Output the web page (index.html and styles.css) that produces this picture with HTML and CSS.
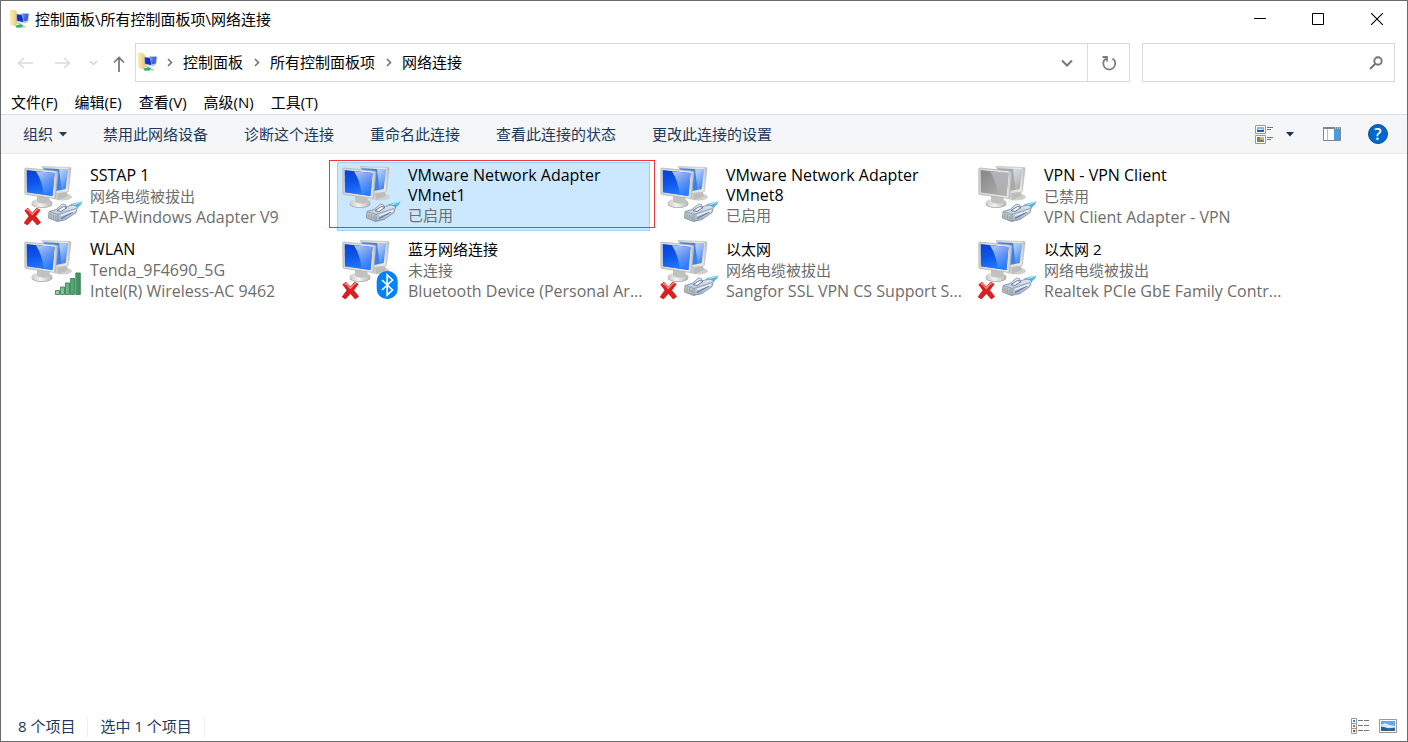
FILE: index.html
```html
<!DOCTYPE html>
<html lang="zh-CN">
<head>
<meta charset="utf-8">
<title>控制面板\所有控制面板项\网络连接</title>
<link rel="stylesheet" href="styles.css">
</head>
<body>
<svg class="sprite" aria-hidden="true">
  <defs>
    <linearGradient id="blue" x1="0" y1="0" x2=".3" y2="1"><stop offset="0" stop-color="#0b3fd0"/><stop offset=".5" stop-color="#0c55ea"/><stop offset="1" stop-color="#2278ff"/></linearGradient>
    <linearGradient id="shine" x1="0" y1="0" x2=".5" y2="1"><stop offset="0" stop-color="#d4e8ff" stop-opacity=".85"/><stop offset="1" stop-color="#fff" stop-opacity=".05"/></linearGradient>
    <linearGradient id="gray" x1="0" y1="0" x2="1" y2="1"><stop offset="0" stop-color="#858585"/><stop offset="1" stop-color="#b4b4b4"/></linearGradient>
    <linearGradient id="bezel" x1="0" y1="0" x2="1" y2="0"><stop offset="0" stop-color="#d2d2d0"/><stop offset=".85" stop-color="#e9e9e7"/><stop offset="1" stop-color="#b6b6b4"/></linearGradient>
    <linearGradient id="base" x1="0" y1="0" x2="1" y2="0"><stop offset="0" stop-color="#c9c9c7"/><stop offset=".45" stop-color="#f3f3f1"/><stop offset="1" stop-color="#b4b4b2"/></linearGradient>
    <linearGradient id="bar" x1="0" y1="0" x2="1" y2="0"><stop offset="0" stop-color="#9dd4ae"/><stop offset="1" stop-color="#398f5a"/></linearGradient>
    <linearGradient id="folder" x1="0" y1="0" x2="1" y2="0"><stop offset="0" stop-color="#fdf3ae"/><stop offset="1" stop-color="#e8c766"/></linearGradient>
    <linearGradient id="shell" x1="0" y1="0" x2="0" y2="1"><stop offset="0" stop-color="#e3ebf4"/><stop offset="1" stop-color="#9fb1ca"/></linearGradient>
  </defs>
  <symbol id="monitors-body" viewBox="0 0 60 60">
    <ellipse cx="38" cy="31" rx="10" ry="3.500" fill="#cfcfcd"/>
    <path d="M33 24l9-1 2 7-10 4z" fill="#bdbdbb"/>
    <path d="M18 .5l28 1q1 0 1 1l-2.500 22q0 1.500-1.500 1.500l-13 2z" fill="url(#bezel)" stroke="#b9b9b7" stroke-width=".6"/>
    <path d="M19.500 2.300l24.500 1.200-2.300 19.500-12 2.500z" fill="currentColor"/>
    <path d="M35 3l9 .5-2.300 19.500-4 .8z" fill="url(#shine)"/>
    <ellipse cx="18" cy="38" rx="10.500" ry="4" fill="#a6a6a4"/>
    <ellipse cx="18" cy="36.800" rx="10.500" ry="4.400" fill="url(#base)"/>
    <path d="M13 29h12l1 7q-6 3.500-13 0z" fill="#c1c1bf"/>
    <path d="M2 2l31 3.200q1 .2 1 1.200l-2.500 24.600q-.2 1.500-1.800 1.300L2 28.500Q1 28.300.9 27L.8 3q.2-1 1.200-1z" fill="url(#bezel)" stroke="#adadab" stroke-width=".7"/>
    <path d="M2.800 4.200l27.700 2.900-2 22.900-25.500-3.800z" fill="currentColor"/>
  </symbol>
  <symbol id="monitors" viewBox="0 0 60 60">
    <use href="#monitors-body" width="60" height="60" color="#3a80f0"/>
    <path d="M2.800 4.200l27.700 2.900-2 22.900-25.500-3.800z" fill="url(#blue)"/>
    <path d="M12 5.200l18.500 1.900-2 22-9-1.400q-1-12-7.500-22.500z" fill="url(#shine)"/>
  </symbol>
  <symbol id="monitors-off" viewBox="0 0 60 60">
    <use href="#monitors-body" width="60" height="60" color="#a9a9a9"/>
    <path d="M2.800 4.200l27.700 2.900-2 22.900-25.500-3.800z" fill="url(#gray)"/>
    <path d="M12 5.200l18.500 1.900-2 22-9-1.400q-1-12-7.500-22.500z" fill="url(#shine)" opacity=".5"/>
  </symbol>
  <symbol id="plug" viewBox="0 0 60 60">
    <path d="M46 38.500l7-2 5.500-1-1.500 3-5 5z" fill="#4bb9e2"/>
    <path d="M48 39.500l9-3.500" stroke="#b0e8fa" stroke-width="1.300"/>
    <path d="M25 45.500l7-2 6.500-5.500 3 .8.500 2 7-1.800 4.500 1.500-1.500 6-10 7-8.500 2-9-3.500z" fill="url(#shell)" stroke="#77879f" stroke-width=".8" stroke-linejoin="round"/>
    <path d="M25 45.500l9 3 18-6M34 48.500v7" fill="none" stroke="#8796ad" stroke-width=".8"/>
    <path d="M33 44.500l6.500-4 3.500 1-6 4z" fill="#fafcfe" stroke="#5e7090" stroke-width=".9"/>
    <path d="M27 47.500v4M29.500 48.500v4M32 49.500v4" stroke="#b0a75a" stroke-width="1.200"/>
    <path d="M37 52.500l12-6.500" stroke="#667894" stroke-width="1.200"/>
    <path d="M37 49.500l14-5" stroke="#f4f8fc" stroke-width="1.300"/>
  </symbol>
  <symbol id="cross" viewBox="0 0 60 60">
    <path d="M.8 44.500L4 42.300l4.300 4.900 4.200-4.900 3.700 1.700-4.600 6.200 5 6.300-3.300 2.500-5-5.600-4.800 5.500-3.300-2 4.800-6.700z" fill="#e01c1c" stroke="#bb1016" stroke-width=".7" stroke-linejoin="round"/>
    <path d="M2.500 44.300l1.500-.8 4.300 5 4.500-5 1.500.7" fill="none" stroke="#ff8b84" stroke-width="1.200"/>
  </symbol>
  <symbol id="signal" viewBox="0 0 60 60">
    <g fill="url(#bar)" stroke="#3d8558" stroke-width=".9"><path d="M31.500 50.500h4v4h-4zM36.500 47h4v7.500h-4zM41.500 43h4v11.500h-4zM46.500 38.500h4v16h-4zM51.800 33h4.500v21.500h-4.500z"/></g>
  </symbol>
  <symbol id="bluetooth" viewBox="0 0 60 60">
    <rect x="34.700" y="31" width="21" height="28" rx="10" fill="#0082fc"/>
    <path d="M40 40l10.500 10-5.300 5V35l5.300 5L40 50" fill="none" stroke="#fff" stroke-width="1.700"/>
  </symbol>
  <symbol id="network-folder" viewBox="0 0 20 20">
    <path d="M.5 0l4.500.5 2 2v10l-1.500 3.500-4.500-1.500z" fill="url(#folder)" stroke="#e0c880" stroke-width=".5"/>
    <path d="M11.500 3.500l7.500 0-1 7.500-5 1z" fill="#3d68dc" stroke="#d5d9e4" stroke-width=".5"/>
    <path d="M6.500 4l7.500.8-.8 7.700-6.400-1.500z" fill="#1233c4" stroke="#d5d9e4" stroke-width=".5"/>
    <path d="M11.500 5l2 .3-.5 4z" fill="#7fa6f8"/>
    <path d="M7 12l5 1.500-1 1.200-4-.9zM13 12l4-.8 1 1.300-4 1z" fill="#c5c8cf"/>
    <path d="M5.500 15.500l5-1.200 3 .7-1.500 2.500-5.500.2z" fill="#2cb765"/>
    <path d="M12.500 15.500l4 1-1 1h-3.500z" fill="#bac3d0"/>
  </symbol>
</svg>

<main class="window">
  <header class="titlebar">
    <svg class="app-icon" viewBox="0 0 20 20" aria-hidden="true"><use href="#network-folder"/></svg>
    <h1 class="title">控制面板\所有控制面板项\网络连接</h1>
    <div class="caption-buttons">
      <button class="caption" aria-label="最小化"><svg width="12" height="12"><path d="M0 5.500h12" stroke="#000"/></svg></button>
      <button class="caption" aria-label="最大化"><svg width="12" height="12"><path d="M.5.500h11v11H.5z" fill="none" stroke="#000"/></svg></button>
      <button class="caption" aria-label="关闭"><svg width="12" height="12"><path d="M0 0l12 12M12 0L0 12" stroke="#000" stroke-width="1.100"/></svg></button>
    </div>
  </header>

  <div class="navigation">
    <div class="history">
      <button class="nav" aria-label="后退" disabled><svg width="16" height="12"><path d="M7 1L1.500 6 7 11M1.500 6H16" fill="none" stroke="#dadada" stroke-width="1.500"/></svg></button>
      <button class="nav" aria-label="前进" disabled><svg width="16" height="12"><path d="M9 1l5.500 5L9 11M14.500 6H0" fill="none" stroke="#dadada" stroke-width="1.500"/></svg></button>
      <button class="nav nav-recent" aria-label="最近的位置" disabled><svg width="9" height="6"><path d="M1 1l3.500 3.500L8 1" fill="none" stroke="#d2d2d2" stroke-width="1.500"/></svg></button>
      <button class="nav nav-up" aria-label="上移"><svg width="12" height="16"><path d="M1 6.500L6 1.500l5 5M6 1.500V16" fill="none" stroke="#757575" stroke-width="1.700"/></svg></button>
    </div>
    <nav class="address" aria-label="地址">
      <svg class="app-icon" viewBox="0 0 20 20" aria-hidden="true"><use href="#network-folder"/></svg>
      <svg class="chevron" width="6" height="9"><path d="M1 1l3.500 3.500L1 8" fill="none" stroke="#737373" stroke-width="1.600"/></svg>
      <a href="#" class="crumb">控制面板</a>
      <svg class="chevron" width="6" height="9"><path d="M1 1l3.500 3.500L1 8" fill="none" stroke="#737373" stroke-width="1.600"/></svg>
      <a href="#" class="crumb">所有控制面板项</a>
      <svg class="chevron" width="6" height="9"><path d="M1 1l3.500 3.500L1 8" fill="none" stroke="#737373" stroke-width="1.600"/></svg>
      <a href="#" class="crumb">网络连接</a>
      <button class="address-drop" aria-label="以前的位置"><svg width="12" height="8"><path d="M1 1.500l5 5 5-5" fill="none" stroke="#777" stroke-width="2"/></svg></button>
      <button class="refresh" aria-label="刷新"><svg width="16" height="16"><path d="M5 3.500A6 6 0 1 0 11.500 3.500M1.500 2H6v4.500" fill="none" stroke="#7d7d7d" stroke-width="1.800"/></svg></button>
    </nav>
    <div class="search">
      <input type="search" class="search-input" aria-label="搜索">
      <svg class="search-icon" width="14" height="14"><circle cx="9" cy="5" r="3.700" fill="none" stroke="#757575" stroke-width="1.900"/><path d="M6.500 7.500L1 13" stroke="#757575" stroke-width="2"/></svg>
    </div>
  </div>

  <nav class="menubar" aria-label="菜单">
    <button class="menu">文件(F)</button>
    <button class="menu">编辑(E)</button>
    <button class="menu">查看(V)</button>
    <button class="menu">高级(N)</button>
    <button class="menu">工具(T)</button>
  </nav>

  <div class="toolbar">
    <button class="command">组织<svg class="caret" width="8" height="5"><path d="M0 0h8L4 4.500z" fill="#1e3d66"/></svg></button>
    <button class="command">禁用此网络设备</button>
    <button class="command">诊断这个连接</button>
    <button class="command">重命名此连接</button>
    <button class="command">查看此连接的状态</button>
    <button class="command">更改此连接的设置</button>
    <div class="view-tools">
      <button class="tool" aria-label="更改视图"><svg width="18" height="19"><path d="M.5.500h10v8H.5zM.5 10.500h10v8H.5z" fill="#fff" stroke="#999"/><path d="M2 2h7v2.500H2z" fill="#7fb7ef"/><path d="M2 4.500h7V7H2z" fill="#2b5f8d"/><path d="M2 5l3-1 4 1z" fill="#eef7ff"/><path d="M2 12h3v5H2z" fill="#55a13e"/><path d="M5 12h4v2.500H5z" fill="#ddb347"/><path d="M5 14.500h2V17H5z" fill="#d3513a"/><path d="M7 14.500h2V17H7z" fill="#4b87c8"/><path d="M12 2.500h6M12 4.500h4M12 12.500h6M12 14.500h4" stroke="#777"/></svg></button>
      <button class="tool tool-more" aria-label="更多选项"><svg width="8" height="5"><path d="M0 0h8L4 4.500z" fill="#17335c"/></svg></button>
      <button class="tool tool-pane" aria-label="预览窗格"><svg width="18" height="14"><path d="M.5.500h17v13H.5z" fill="#fff" stroke="#858585"/><path d="M0 0h18v2H0z" fill="#858585"/><path d="M11 2h6v11h-6z" fill="#439ee6"/><path d="M4.500 2v11" stroke="#bbb"/><path d="M12 1h1M14 1h1M16 1h1" stroke="#fff"/></svg></button>
      <button class="tool help" aria-label="帮助">?</button>
    </div>
  </div>

  <ul class="connections">
    <li class="connection">
      <svg class="adapter" viewBox="0 0 60 60" aria-hidden="true"><use href="#monitors"/><use href="#cross"/><use href="#plug"/></svg>
      <div class="details"><div class="name latin">SSTAP 1</div><div class="info">网络电缆被拔出</div><div class="info latin">TAP-Windows Adapter V9</div></div>
    </li>
    <li class="connection selected">
      <svg class="adapter" viewBox="0 0 60 60" aria-hidden="true"><use href="#monitors"/><use href="#plug"/></svg>
      <div class="details"><div class="name latin name-wrap">VMware Network Adapter VMnet1</div><div class="info">已启用</div></div>
    </li>
    <li class="connection">
      <svg class="adapter" viewBox="0 0 60 60" aria-hidden="true"><use href="#monitors"/><use href="#plug"/></svg>
      <div class="details"><div class="name latin name-wrap">VMware Network Adapter VMnet8</div><div class="info">已启用</div></div>
    </li>
    <li class="connection">
      <svg class="adapter" viewBox="0 0 60 60" aria-hidden="true"><use href="#monitors-off"/><use href="#plug"/></svg>
      <div class="details"><div class="name latin">VPN - VPN Client</div><div class="info">已禁用</div><div class="info latin">VPN Client Adapter - VPN</div></div>
    </li>
    <li class="connection">
      <svg class="adapter" viewBox="0 0 60 60" aria-hidden="true"><use href="#monitors"/><use href="#signal"/></svg>
      <div class="details"><div class="name latin">WLAN</div><div class="info latin">Tenda_9F4690_5G</div><div class="info latin">Intel(R) Wireless-AC 9462</div></div>
    </li>
    <li class="connection">
      <svg class="adapter" viewBox="0 0 60 60" aria-hidden="true"><use href="#monitors"/><use href="#cross"/><use href="#bluetooth"/></svg>
      <div class="details"><div class="name">蓝牙网络连接</div><div class="info">未连接</div><div class="info latin">Bluetooth Device (Personal Ar...</div></div>
    </li>
    <li class="connection">
      <svg class="adapter" viewBox="0 0 60 60" aria-hidden="true"><use href="#monitors"/><use href="#cross"/><use href="#plug"/></svg>
      <div class="details"><div class="name">以太网</div><div class="info">网络电缆被拔出</div><div class="info latin">Sangfor SSL VPN CS Support S...</div></div>
    </li>
    <li class="connection">
      <svg class="adapter" viewBox="0 0 60 60" aria-hidden="true"><use href="#monitors"/><use href="#cross"/><use href="#plug"/></svg>
      <div class="details"><div class="name">以太网 2</div><div class="info">网络电缆被拔出</div><div class="info latin">Realtek PCIe GbE Family Contr...</div></div>
    </li>
  </ul>

  <footer class="statusbar">
    <span class="status">8 个项目</span>
    <span class="status">选中 1 个项目</span>
    <div class="layout-tools">
      <button class="tool" aria-label="详细信息"><svg width="18" height="16"><path d="M.5.500h5v15h-5zM.5 5.500h5M.5 10.500h5" fill="#fff" stroke="#999"/><path d="M2 2h2v2H2z" fill="#3e87cc"/><path d="M2 7h2v2H2z" fill="#9a8424"/><path d="M2 12h2v2H2z" fill="#c83125"/><path d="M7 2.500h5M13 2.500h5M7 7.500h5M13 7.500h5M7 12.500h5M13 12.500h5" stroke="#777"/></svg></button>
      <button class="tool" aria-label="大图标"><svg width="18" height="14"><path d="M.5.500h17v13H.5z" fill="#fff" stroke="#999"/><path d="M2 2h14v10H2z" fill="#5fa8ea"/><path d="M2 6l4-2 5 2 5 1v2H2z" fill="#d5edfa"/><path d="M2 7.500l3 .5 5 1.500 6-1V12H2z" fill="#2c6390"/></svg></button>
    </div>
  </footer>
</main>
</body>
</html>
```

FILE: styles.css
```css
* {
  box-sizing: border-box;
}

body {
  margin: 0;
  font: 15px/21px "Open Sans", "Noto Sans CJK SC", sans-serif;
  color: #000;
}

button {
  padding: 0;
  border: 0;
  background: none;
  font: inherit;
  color: inherit;
}

svg {
  display: block;
  flex: none;
}

.sprite {
  position: absolute;
  width: 0;
  height: 0;
}

.window {
  display: flex;
  flex-direction: column;
  min-height: 100vh;
  border: 1px solid #6b6b6b;
  background: #fff;
}

.titlebar {
  display: flex;
  align-items: center;
  height: 37px;
  padding-left: 9px;
}

.app-icon {
  width: 20px;
  height: 20px;
}

.title {
  margin: 0 0 0 5px;
  font-size: 15px;
  font-weight: 400;
}

.caption-buttons {
  display: flex;
  align-self: flex-start;
  margin-left: auto;
}

.caption {
  display: grid;
  place-items: center;
  width: 58px;
  height: 36px;
}

.caption:last-child {
  width: 60px;
}

.navigation {
  display: flex;
  align-items: stretch;
  height: 39px;
  margin: 5px 12px 0 16px;
}

.history {
  display: flex;
  align-items: center;
  width: 118px;
}

.nav {
  margin-right: 22px;
}

.nav-recent {
  margin-right: 15px;
  margin-left: -4px;
}

.nav-up {
  margin: 3px 0 0;
}

.address {
  display: flex;
  flex: 1;
  align-items: center;
  padding-left: 2px;
  border: 1px solid #d9d9d9;
}

.chevron {
  margin: 0 10px 0 9px;
}

.crumb {
  color: #000;
  text-decoration: none;
}

.crumb + .chevron {
  margin-left: 11px;
}

.address-drop {
  display: grid;
  place-items: center;
  width: 40px;
  height: 37px;
  margin-left: auto;
}

.refresh {
  display: grid;
  place-items: center;
  width: 42px;
  height: 37px;
  border-left: 1px solid #d9d9d9;
}

.search {
  display: flex;
  align-items: center;
  width: 253px;
  margin-left: 12px;
  padding-right: 11px;
  border: 1px solid #d9d9d9;
}

.search-input {
  flex: 1;
  min-width: 0;
  height: 36px;
  padding: 0 8px;
  border: 0;
  outline: 0;
  background: none;
  font: inherit;
}

.menubar {
  display: flex;
  align-items: center;
  gap: 17px;
  height: 32px;
  padding: 8px 10px 0;
}

.toolbar {
  display: flex;
  align-items: center;
  gap: 36px;
  height: 40px;
  padding: 0 19px 0 22px;
  border-top: 1px solid #dadbdc;
  border-bottom: 1px solid #e6e8ea;
  background: #f4f6f8;
  color: #1e395b;
}

.command {
  display: flex;
  align-items: center;
}

.caret {
  margin-left: 6px;
}

.view-tools {
  display: flex;
  align-items: center;
  margin-left: auto;
}

.tool-more {
  margin-left: 13px;
}

.tool-pane {
  margin-left: 29px;
}

.help {
  width: 20px;
  height: 20px;
  margin-left: 27px;
  border: 1px solid #0f4f8f;
  border-radius: 50%;
  background: #0067cc;
  color: #fff;
  font-size: 16px;
  font-weight: 600;
  line-height: 18px;
}

.connections {
  display: grid;
  flex: 1;
  grid-template-columns: repeat(auto-fill, 313px);
  grid-auto-rows: 69px;
  gap: 5px;
  margin: 0;
  padding: 8px 0 0 18px;
  list-style: none;
}

.connection {
  position: relative;
  display: flex;
  padding: 3px 4px 0 5px;
}

.selected {
  background: #cce8ff;
  box-shadow: inset 0 0 0 1px #99d1ff;
}

.selected::after {
  position: absolute;
  inset: -2px -5px 3px -8px;
  border: 1px solid #f0353b;
  content: "";
}

.adapter {
  width: 60px;
  height: 60px;
  margin-top: 1px;
}

.details {
  flex: 1;
  min-width: 0;
  margin-left: 6px;
}

.latin {
  font-size: 16px;
}

.name-wrap {
  max-width: 200px;
  line-height: 20px;
}

.info {
  color: #6d6d6d;
  white-space: nowrap;
}

.statusbar {
  display: flex;
  align-items: center;
  height: 30px;
  padding: 0 10px 0 17px;
  color: #1e395b;
}

.status {
  margin-right: 12px;
  padding-right: 12px;
  border-right: 1px solid #f0f0f0;
}

.layout-tools {
  display: flex;
  align-items: center;
  gap: 10px;
  margin-left: auto;
}
```
